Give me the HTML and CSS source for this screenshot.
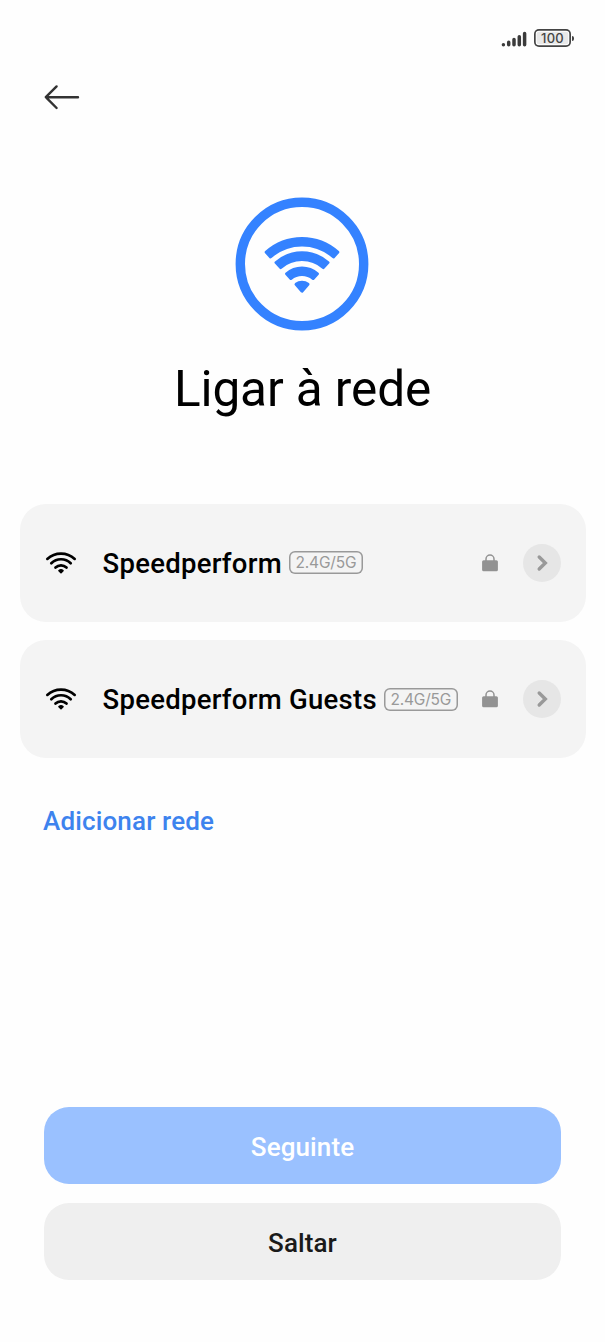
FILE: index.html
```html
<!DOCTYPE html>
<html lang="pt">
<head>
<meta charset="utf-8">
<title>Ligar à rede</title>
<link rel="stylesheet" href="styles.css">
</head>
<body>
<svg class="defs" width="0" height="0" aria-hidden="true">
  <symbol id="wifi" viewBox="0 0 32 24">
    <g fill="none" stroke="#000" stroke-width="2.7" stroke-linecap="round">
      <path d="M2.3 7.9A20.6 20.6 0 0 1 29.7 7.9"/>
      <path d="M6.3 12.3A13.6 13.6 0 0 1 25.7 12.3"/>
      <path d="M10.5 16.5A8 8 0 0 1 21.5 16.5"/>
    </g>
    <path d="M14 19.6Q16 18 18 19.6L16 21.6Z" stroke="#000" stroke-width="1.6" stroke-linejoin="round"/>
  </symbol>
  <symbol id="lock" viewBox="0 0 16 18">
    <path d="M4 8V5a4 4 0 0 1 8 0V8" fill="none" stroke="#929292" stroke-width="1.5"/>
    <rect x="0.1" y="6.2" width="15.8" height="11" rx="1.5" fill="#929292"/>
  </symbol>
  <symbol id="chevron" viewBox="0 0 38 38">
    <path d="M16.2 13L22.3 19L16.2 25" fill="none" stroke="#999" stroke-width="3.4" stroke-linecap="round" stroke-linejoin="miter"/>
  </symbol>
</svg>
<div class="screen">
  <header class="status">
    <svg class="signal" width="26" height="16" viewBox="0 0 26 16" stroke="#3b3b3b" stroke-width="3.5" stroke-linecap="round">
      <path d="M2.4 13.7V13.8M7.7 11.3V13.8M13 8.6V13.8M18.3 5.7V13.8M23.6 2.4V13.8"/>
    </svg>
    <div class="battery"><span>100</span></div>
    <i class="battery-tip"></i>
  </header>
  <nav class="nav">
    <svg width="36" height="26" viewBox="0 0 36 26" fill="none" stroke="#333" stroke-width="2.4" stroke-linecap="round" stroke-linejoin="round">
      <path d="M34 13.2H2M12.6 2.4L1.8 13.2L12.6 24"/>
    </svg>
  </nav>
  <svg class="hero" width="134" height="134" viewBox="-67 -67 134 134">
    <circle r="61.7" fill="none" stroke="#3482ff" stroke-width="9.4"/>
    <g transform="translate(0 28.3)" fill="#3482ff" stroke="#3482ff" stroke-width="3" stroke-linejoin="round">
      <path d="M-35.8-40.1A53.7 53.7 0 0 1 35.8-40.1L31.5-35.4A47.3 47.3 0 0 0-31.5-35.4Z"/>
      <path d="M-26-29.7A39.4 39.4 0 0 1 26-29.7L21.4-24.7A32.6 32.6 0 0 0-21.4-24.7Z"/>
      <path d="M-15.5-18.5A24 24 0 0 1 15.5-18.5L11.2-13.8A17.7 17.7 0 0 0-11.2-13.8Z"/>
      <path d="M-6-8A10 10 0 0 1 6-8L0-1.1Z"/>
    </g>
  </svg>
  <h1 class="title">Ligar à rede</h1>
  <main class="networks">
    <div class="network">
      <svg class="wifi"><use href="#wifi"/></svg>
      <span class="name">Speedperform</span>
      <span class="band">2.4G/5G</span>
      <svg class="lock"><use href="#lock"/></svg>
      <svg class="more"><use href="#chevron"/></svg>
    </div>
    <div class="network">
      <svg class="wifi"><use href="#wifi"/></svg>
      <span class="name">Speedperform Guests</span>
      <span class="band">2.4G/5G</span>
      <svg class="lock"><use href="#lock"/></svg>
      <svg class="more"><use href="#chevron"/></svg>
    </div>
  </main>
  <a class="add">Adicionar rede</a>
  <footer class="actions">
    <button class="btn primary">Seguinte</button>
    <button class="btn">Saltar</button>
  </footer>
</div>
</body>
</html>
```
FILE: styles.css
```css
* { box-sizing: border-box; }
body { margin: 0; background: #fefefe; font-family: Roboto, sans-serif; }
.defs { position: absolute; }
.screen { width: 605px; height: 1342px; display: flex; flex-direction: column; overflow: hidden; }
.status { display: flex; height: 48px; padding: 29px 31px 0 0; justify-content: flex-end; }
.signal { margin: 2px 7px 0 0; }
.battery { width: 37px; height: 18px; border-radius: 5px; background: #e9e9e9; display: flex; align-items: center; justify-content: center; font: 500 13px/18px Inter, sans-serif; letter-spacing: 0.3px; color: #444; box-shadow: inset 0 0 0 1.7px #444, inset 0 0 0 2.7px #fff; }
.battery-tip { width: 2px; height: 5px; margin: 6.5px 0 0 1px; background: #444; border-radius: 0 2px 2px 0; }
.nav { height: 148.8px; padding: 36px 0 0 44px; }
.hero { flex: none; align-self: center; margin-right: 1px; }
.title { margin: 28px 0 0; height: 60px; font-size: 49.5px; letter-spacing: -0.1px; font-weight: 400; line-height: 61px; text-align: center; color: #000; white-space: nowrap; }
.networks { display: flex; flex-direction: column; gap: 18.7px; margin: 85.2px 19px 0 19.5px; }
.network { display: flex; align-items: center; height: 117.6px; border-radius: 26px; background: #f4f4f4; padding: 0 25.5px 0 25.5px; }
.wifi { width: 32px; height: 24px; flex: none; }
.name { margin-left: 25.5px; padding-top: 2px; font-size: 27.5px; letter-spacing: 0.27px; font-weight: 500; line-height: 34px; color: #000; white-space: nowrap; }
.band { margin-left: 7px; width: 74px; height: 23px; border-radius: 6px; box-shadow: inset 0 0 0 1.5px #999; font: 400 15.5px/24px Inter, sans-serif; letter-spacing: -0.2px; color: #999; text-align: center; }
.lock { width: 16px; height: 18px; margin-left: auto; }
.more { width: 38px; height: 38px; margin-left: 25px; border-radius: 50%; background: #e6e6e6; }
.add { margin: 47px 0 0 43px; font-size: 26px; letter-spacing: 0.15px; font-weight: 500; line-height: 32px; color: #3d83ee; align-self: flex-start; }
.actions { margin: auto 44px 62px; display: flex; flex-direction: column; gap: 19px; }
.btn { height: 77px; border: 0; border-radius: 25px; background: #efefef; color: #1a1a1a; font: 500 26px/32px Roboto, sans-serif; letter-spacing: 0.1px; padding: 2px 0 0; }
.primary { background: #9ac1ff; color: #fff; }
```
